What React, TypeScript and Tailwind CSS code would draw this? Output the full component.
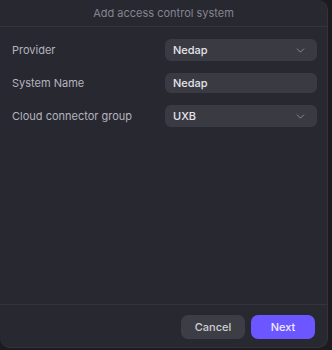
import { ChevronDown } from "lucide-react";

function SelectBox({ value }: { value: string }) {
  return (
    <div className="flex h-[22px] w-[152px] items-center justify-between rounded-[6px] bg-[#3a3a43] pl-[8px] pr-[10px]">
      <span className="text-[11px] font-medium text-[#e4e4ea]">{value}</span>
      <ChevronDown size={13} strokeWidth={1.4} className="text-[#a0a0aa]" />
    </div>
  );
}

export default function App() {
  return (
    <div className="h-[350px] w-[332px] bg-[#1b1b20] font-['Inter',sans-serif]">
      <div className="flex h-[348px] w-[328px] flex-col rounded-tr-[10px] rounded-b-[10px] border-r border-b border-[#33333c] bg-[#282831]">
        <div className="flex h-[27px] items-center justify-center border-b border-[#34343d]">
          <span className="text-[11px] text-[#85858f]">Add access control system</span>
        </div>

        <div className="flex flex-col gap-[12px] pl-[12px] pr-[10px] pt-[12px]">
          <div className="flex items-center justify-between">
            <span className="text-[11px] text-[#b4b4bd]">Provider</span>
            <SelectBox value="Nedap" />
          </div>
          <div className="flex items-center justify-between">
            <span className="text-[11px] text-[#b4b4bd]">System Name</span>
            <div className="flex h-[20px] w-[152px] items-center rounded-[6px] bg-[#3a3a43] pl-[8px]">
              <span className="text-[11px] font-medium text-[#e4e4ea]">Nedap</span>
            </div>
          </div>
          <div className="flex items-center justify-between">
            <span className="text-[11px] text-[#b4b4bd]">Cloud connector group</span>
            <SelectBox value="UXB" />
          </div>
        </div>

        <div className="mt-auto flex justify-end gap-[6px] border-t border-[#34343d] pb-[8px] pr-[12px] pt-[10px]">
          <button
            type="button"
            className="h-[24px] w-[64px] rounded-[7px] bg-[#3d3d45] text-[11px] font-medium text-[#cfcfd6]"
          >
            Cancel
          </button>
          <button
            type="button"
            className="h-[24px] w-[64px] rounded-[7px] bg-[#6c56ff] text-[11px] font-medium text-[#eeeaff]"
          >
            Next
          </button>
        </div>
      </div>
    </div>
  );
}
